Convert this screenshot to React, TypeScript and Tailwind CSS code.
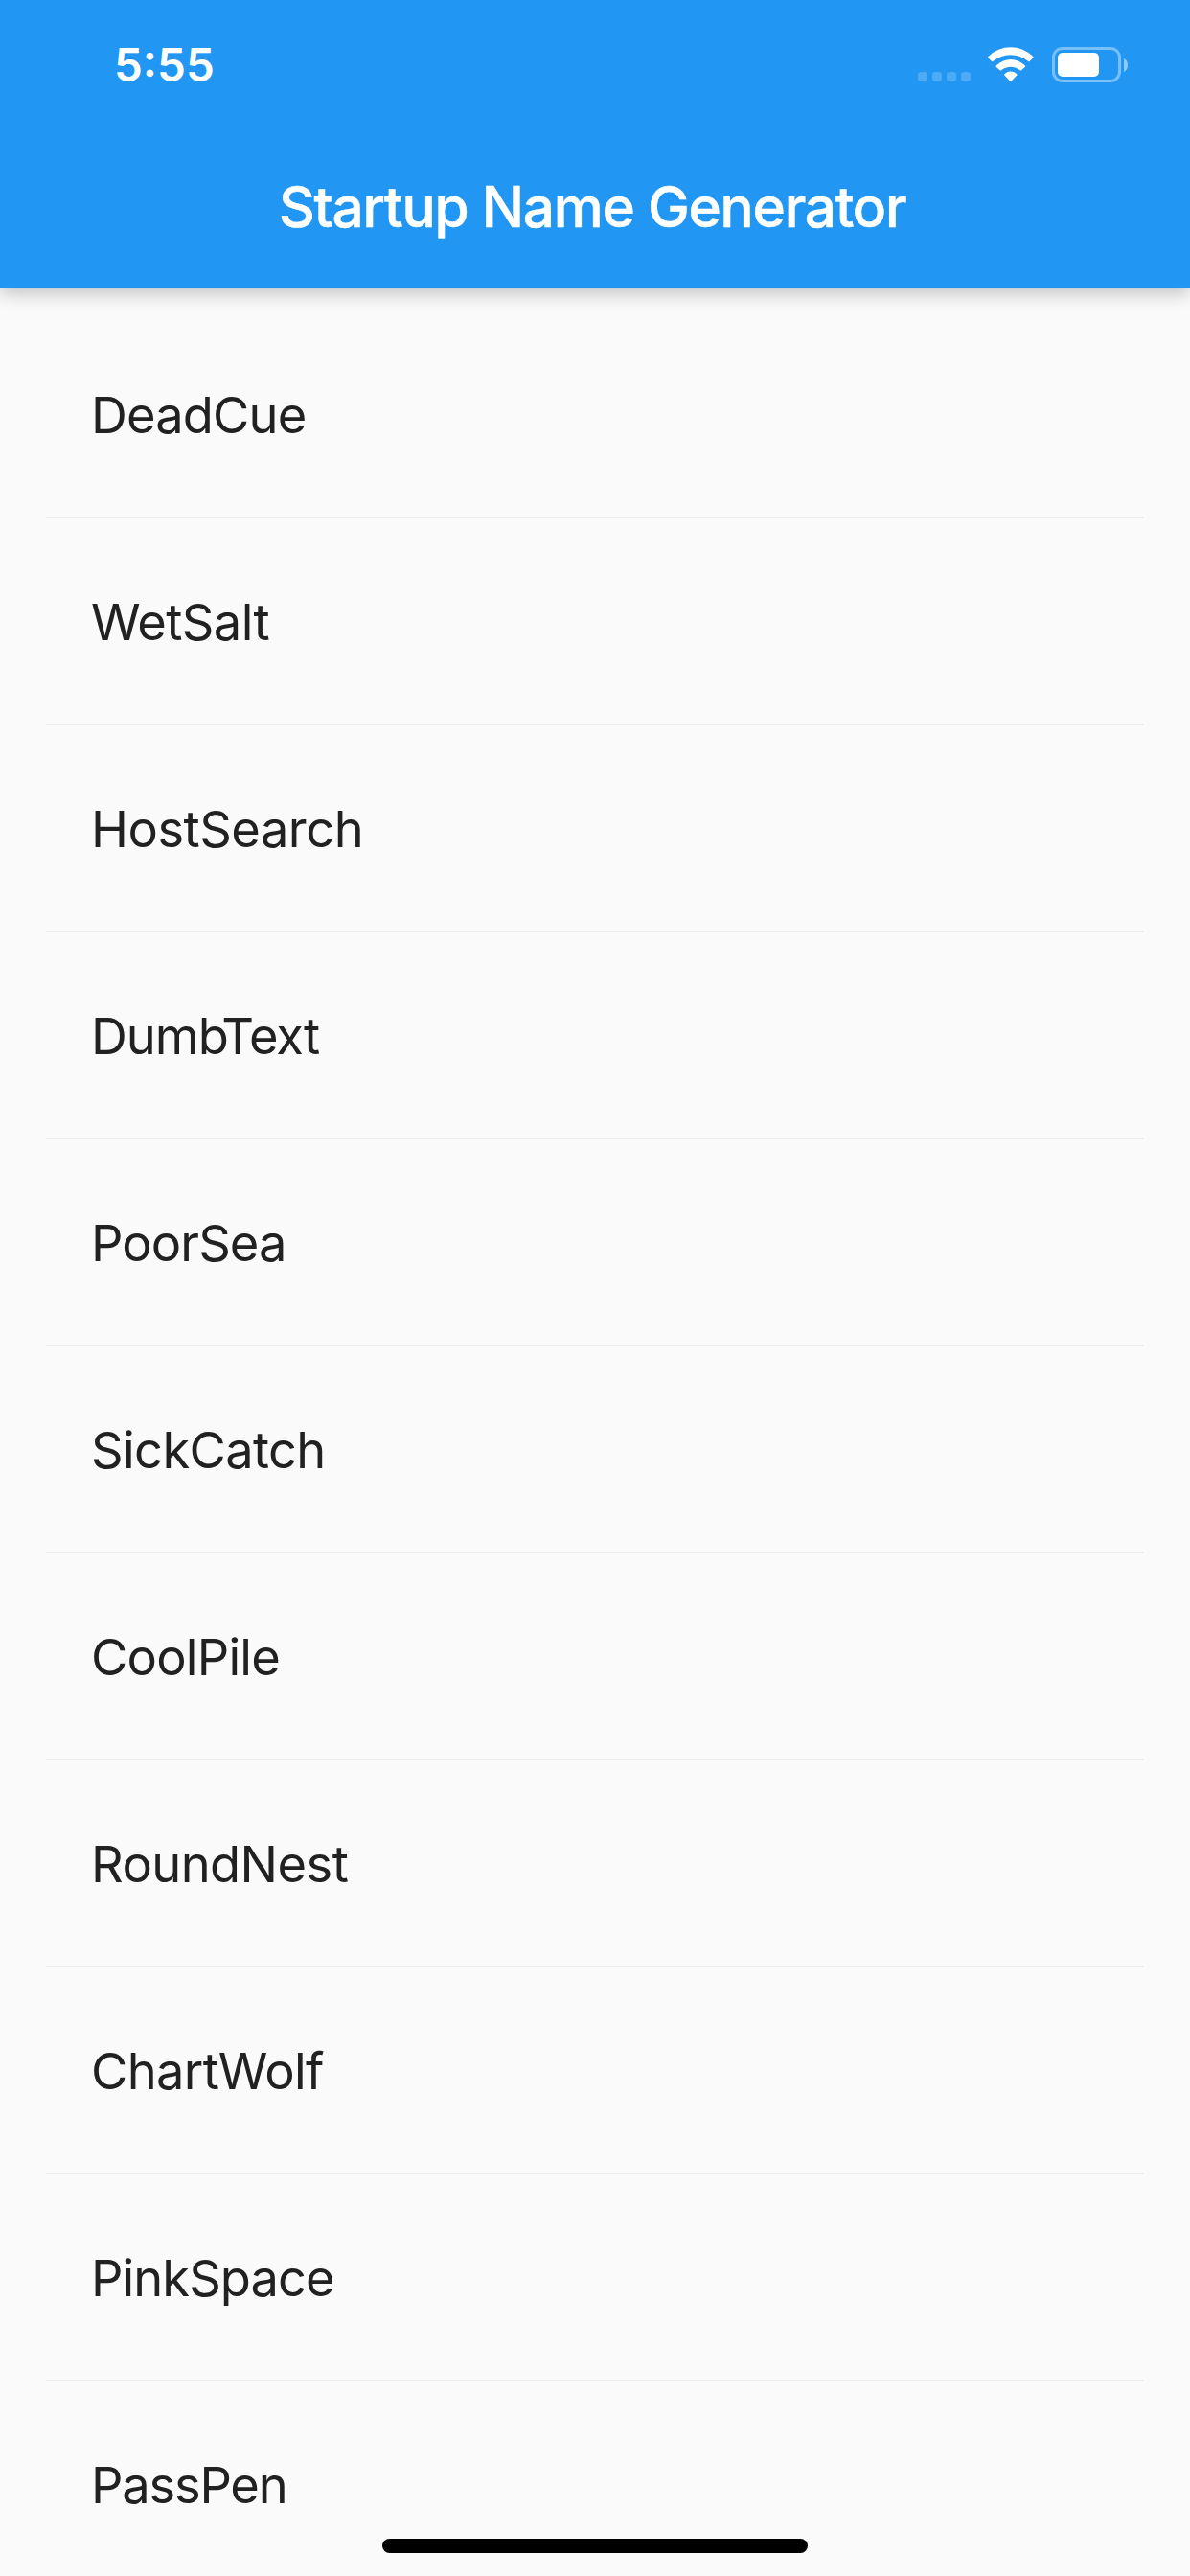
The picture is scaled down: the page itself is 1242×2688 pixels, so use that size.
import { Fragment, type ReactNode } from "react";

type Suggestion = { key: string; label: ReactNode; tracking: string };

const suggestions: Suggestion[] = [
  { key: "DeadCue", label: "DeadCue", tracking: "tracking-[-0.83px]" },
  { key: "WetSalt", label: "WetSalt", tracking: "tracking-[-0.6px]" },
  { key: "HostSearch", label: "HostSearch", tracking: "tracking-[-0.48px]" },
  {
    key: "DumbText",
    label: (
      <>
        Dum<span className="tracking-[-7.5px]">b</span>Text
      </>
    ),
    tracking: "tracking-[-1px]",
  },
  { key: "PoorSea", label: "PoorSea", tracking: "tracking-[-0.9px]" },
  { key: "SickCatch", label: "SickCatch", tracking: "tracking-[-0.61px]" },
  { key: "CoolPile", label: "CoolPile", tracking: "tracking-[-0.76px]" },
  { key: "RoundNest", label: "RoundNest", tracking: "tracking-[-0.55px]" },
  { key: "ChartWolf", label: "ChartWolf", tracking: "tracking-[-0.6px]" },
  { key: "PinkSpace", label: "PinkSpace", tracking: "tracking-[-0.92px]" },
  { key: "PassPen", label: "PassPen", tracking: "tracking-[-1.2px]" },
];

function SignalDots() {
  return (
    <div className="mt-[23px] flex gap-[5px]">
      {[0, 1, 2, 3].map((i) => (
        <span key={i} className="size-[10px] rounded-[3px] bg-white/20" />
      ))}
    </div>
  );
}

function WifiIcon() {
  return (
    <svg className="ml-[18px] h-[37px] w-[48px]" viewBox="275 57 144 111" fill="white">
      <path d="M277 86 A99 99 0 0 1 416 86 Q419 88.500 417 90.500 L406 102 Q404 104 402 102 A85 85 0 0 0 291 102 Q289 104 287 102 L276 90.500 Q274 88.500 277 86 Z" />
      <path d="M302 115 A62 62 0 0 1 391 115 Q394 117 392 119 L380 130 Q378 132 376 130 A46 46 0 0 0 317 130 Q315 132 313 130 L301 119 Q299 117 302 115 Z" />
      <path d="M328 141 A27 27 0 0 1 365 141 Q368 143 366 145.500 L348 164 Q346.500 165.500 345 164 L327 145.500 Q325 143 328 141 Z" />
    </svg>
  );
}

function BatteryIcon() {
  return (
    <div className="ml-[19px] flex h-[37px] items-center gap-[3px]">
      <div className="h-[37px] w-[72px] rounded-[11px] border-[3px] border-white/40 p-[3px]">
        <div className="h-[25px] w-[43px] rounded-[5px] bg-white" />
      </div>
      <svg className="h-[14px] w-[4px]" viewBox="0 0 4 14" fill="white" fillOpacity="0.5">
        <path d="M0 0 Q4 2 4 7 Q4 12 0 14 Z" />
      </svg>
    </div>
  );
}

export default function App() {
  return (
    <div className="relative flex h-[2688px] w-[1242px] flex-col overflow-hidden bg-[#fafafa] font-['Inter','Liberation_Sans',sans-serif]">
      <header className="z-10 h-[300px] shrink-0 bg-[#2196f3] text-white shadow-[0_6px_18px_rgba(0,0,0,0.23)]">
        <div className="flex h-[132px] justify-between pr-[65px] pl-[119px]">
          <span className="pt-[38px] text-[47.5px] leading-[60px] font-semibold">5:55</span>
          <div className="flex pt-[49px]">
            <div className="pt-[3px]">
              <SignalDots />
            </div>
            <WifiIcon />
            <BatteryIcon />
          </div>
        </div>
        <h1 className="pl-[291px] text-[58.5px] leading-[168px] font-medium tracking-[-1.24px] whitespace-nowrap [-webkit-text-stroke:0.5px_white]">
          Startup Name Generator
        </h1>
      </header>

      <ul className="flex flex-col px-12 pt-12">
        {suggestions.map((item, i) => (
          <Fragment key={item.key}>
            {i > 0 && (
              <li className="flex h-12 shrink-0 items-center" aria-hidden="true">
                <div className="h-[2px] w-full bg-[#ebebeb]" />
              </li>
            )}
            <li className="flex h-[168px] shrink-0 items-center pt-[2px] pl-[47px] text-[52.4px] leading-none text-[#212121]">
              <span className={item.tracking}>{item.label}</span>
            </li>
          </Fragment>
        ))}
      </ul>

      <div className="absolute bottom-[24px] left-[399px] h-[15px] w-[444px] rounded-full bg-black" />
    </div>
  );
}
